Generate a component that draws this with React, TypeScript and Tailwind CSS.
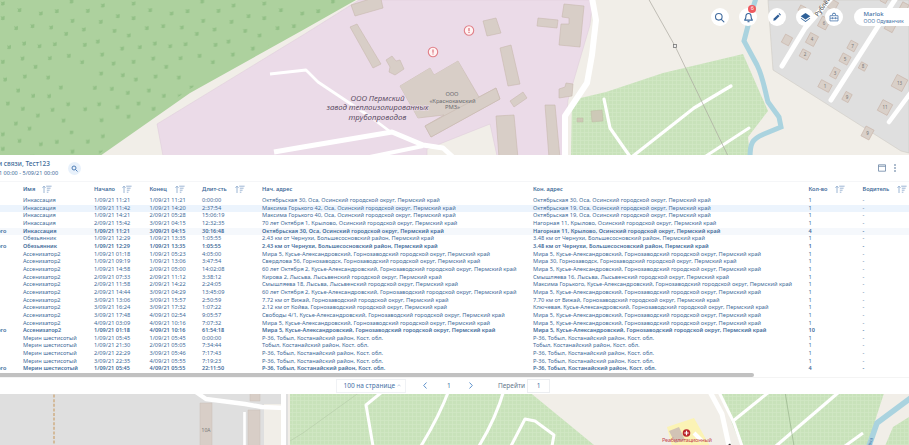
import React from "react";

type Row = {
  name: string;
  start: string;
  end: string;
  dur: string;
  from: string;
  to: string;
  count: string;
  total?: boolean;
};

const OSA = "Оса, Осинский городской округ, Пермский край";
const GORN = "Горнозаводский городской округ, Пермский край";
const KUS = "Кусье-Александровский, " + GORN;
const BOL = "от Чернухи, Большесосновский район, Пермский край";
const LYS = "Лысьва, Лысьвенский городской округ, Пермский край";
const TOB = "Тобыл, Костанайский район, Кост. обл.";
const KRY = "Крылово, Осинский городской округ, Пермский край";

const r = (
  name: string,
  start: string,
  end: string,
  dur: string,
  from: string,
  to: string,
  count = "1",
  total = false
): Row => ({ name, start, end, dur, from, to, count, total });

const rows: Row[] = [
  r("Инкассация", "1/09/21 11:21", "1/09/21 11:21", "0:00:00", "Октябрьская 30, " + OSA, "Октябрьская 30, " + OSA),
  r("Инкассация", "1/09/21 11:42", "1/09/21 14:20", "2:37:54", "Максима Горького 42, " + OSA, "Октябрьская 19, " + OSA),
  r("Инкассация", "1/09/21 14:21", "2/09/21 05:28", "15:06:19", "Максима Горького 40, " + OSA, "Октябрьская 19, " + OSA),
  r("Инкассация", "2/09/21 15:42", "3/09/21 04:15", "12:32:35", "70 лет Октября 1, " + KRY, "Нагорная 11, " + KRY),
  r("Инкассация", "1/09/21 11:21", "3/09/21 04:15", "30:16:48", "Октябрьская 30, " + OSA, "Нагорная 11, " + KRY, "4", true),
  r("Обезьянник", "1/09/21 12:29", "1/09/21 13:35", "1:05:55", "2.43 км " + BOL, "3.48 км " + BOL),
  r("Обезьянник", "1/09/21 12:29", "1/09/21 13:35", "1:05:55", "2.43 км " + BOL, "3.48 км " + BOL, "1", true),
  r("Ассенизатор2", "1/09/21 01:18", "1/09/21 05:23", "4:05:00", "Мира 5, " + KUS, "Мира 5, " + KUS),
  r("Ассенизатор2", "1/09/21 09:19", "1/09/21 13:06", "3:47:54", "Свердлова 56, Горнозаводск, " + GORN, "Мира 30, Горнозаводск, " + GORN),
  r("Ассенизатор2", "1/09/21 14:58", "2/09/21 05:00", "14:02:08", "60 лет Октября 2, " + KUS, "Мира 5, " + KUS),
  r("Ассенизатор2", "2/09/21 07:33", "2/09/21 11:12", "3:38:12", "Кирова 2, " + LYS, "Смышляева 16, " + LYS),
  r("Ассенизатор2", "2/09/21 11:58", "2/09/21 14:22", "2:24:05", "Смышляева 18, " + LYS, "Максима Горького, " + KUS),
  r("Ассенизатор2", "2/09/21 14:44", "3/09/21 04:29", "13:45:09", "60 лет Октября 2, " + KUS, "Мира 5, " + KUS),
  r("Ассенизатор2", "3/09/21 13:06", "3/09/21 15:57", "2:50:59", "7.72 км от Вижай, " + GORN, "7.70 км от Вижай, " + GORN),
  r("Ассенизатор2", "3/09/21 16:24", "3/09/21 17:32", "1:07:22", "2.12 км от Койва, " + GORN, "Ключевая, " + KUS),
  r("Ассенизатор2", "3/09/21 17:48", "4/09/21 02:54", "9:05:57", "Свободы 4/1, " + KUS, "Мира 5, " + KUS),
  r("Ассенизатор2", "4/09/21 03:09", "4/09/21 10:16", "7:07:32", "Мира 5, " + KUS, "Мира 5, " + KUS),
  r("Ассенизатор2", "1/09/21 01:18", "4/09/21 10:16", "61:54:18", "Мира 5, " + KUS, "Мира 5, " + KUS, "10", true),
  r("Мерин шестисотый", "1/09/21 05:45", "1/09/21 05:45", "0:00:00", "Р-36, " + TOB, "Р-36, " + TOB),
  r("Мерин шестисотый", "1/09/21 21:30", "2/09/21 05:05", "7:34:44", TOB, TOB),
  r("Мерин шестисотый", "2/09/21 22:29", "3/09/21 05:46", "7:17:43", "Р-36, " + TOB, "Р-36, " + TOB),
  r("Мерин шестисотый", "3/09/21 22:35", "4/09/21 05:55", "7:19:23", "Р-36, " + TOB, "Р-36, " + TOB),
  r("Мерин шестисотый", "1/09/21 05:45", "4/09/21 05:55", "22:11:50", "Р-36, " + TOB, "Р-36, " + TOB, "4", true),
];

const COLS =
  "grid grid-cols-[23px_71px_55.5px_52.5px_60px_271px_275.5px_54px_46.5px] items-center whitespace-nowrap";

function SortIcon() {
  return (
    <svg className="h-[9px] w-[10px] shrink-0" viewBox="0 0 10 9" fill="none" stroke="#7c9ec5" strokeWidth="0.75">
      <path d="M2 8V1.2M0.5 2.8L2 1.2L3.5 2.8M4.2 1.2H9.6M4.8 3.2H8.6M4.8 5.2H7.6M4.8 7.2H6.4" />
    </svg>
  );
}

function Head({ label, w }: { label: string; w: string }) {
  return (
    <div className="flex items-center">
      <span className={w}>{label}</span>
      <SortIcon />
    </div>
  );
}

const trees = [
  [58, 30], [122, 40], [170, 33], [214, 4], [263, 32], [308, 16], [353, 48], [8, 10], [8, 54], [48, 84], [97, 78],
  [153, 82], [217, 62], [302, 65], [198, 101], [251, 88], [343, 92], [386, 106], [72, 130], [27, 141], [118, 138],
  [164, 132], [254, 134], [293, 124], [366, 145], [67, 175], [149, 174], [206, 167], [8, 185], [106, 200], [246, 186],
  [306, 163], [340, 190], [144, 232], [74, 229], [15, 238], [303, 220], [368, 225], [182, 262], [54, 271], [284, 263],
  [335, 266], [383, 278], [99, 287], [147, 288], [23, 310], [68, 326], [157, 329], [204, 312], [255, 327], [297, 312],
  [352, 321], [113, 346], [385, 349], [190, 361], [304, 360], [47, 370], [88, 385],
];

const houses: [number, number, number, number, number, string][] = [
  [787, 40, 8, 9, 28, ""], [812, 39.5, 9, 11, 28, "4"], [805, 54.5, 9, 8, 28, "2"], [824, 23, 9, 11, 28, "6"],
  [833, 5, 8, 9, 28, ""], [852.5, 46, 8, 9, 28, "7"], [845, 59, 9, 9, 28, "5"], [835, 73, 7, 10, 28, "3"],
  [825, 86, 12, 8, 28, "1"], [863, 66.5, 7, 7, 28, "8"], [847, 97, 7, 9, 28, "9"], [890, 27, 9, 8, 28, ""],
  [899.5, 83, 12, 13, 28, "13"], [885, 107.5, 11, 12, 28, "11"], [867.5, 133, 9, 11, 28, "9"],
  [802, 9, 6, 6, 28, ""], [884, 0, 6, 5, 28, ""], [904, 7, 7, 8, 28, ""],
];

function MapLayer() {
  return (
    <svg className="absolute inset-0 h-[445px] w-[909px]" viewBox="0 0 909 445">
      <defs>
        <pattern id="wood" width="130.7" height="130.7" patternUnits="userSpaceOnUse">
          <g fill="#8bbb80" opacity="0.8">
            {trees.map(([x, y], i) => (
              <path key={i} transform={`translate(${x / 3} ${y / 3})`} d="M-2.2 -2L-0.6 -1.2L2 -2.1L1.9 1.6L0.2 2.2L-1.9 1.8L-1.2 0Z" />
            ))}
          </g>
        </pattern>
        <pattern id="plots" width="4" height="4" patternUnits="userSpaceOnUse">
          <rect width="4" height="4" fill="#c8e2ba" />
          <path d="M0 0.5H4M0.5 0V4" stroke="#d0e7c4" strokeWidth="0.8" />
        </pattern>
      </defs>
      <rect width="909" height="445" fill="#f1eee8" />

      <path d="M0 0H356L303 30L190 93L100 156H0Z" fill="#add19e" />
      <path d="M0 0H352L300 28L188 90L96 156H0Z" fill="url(#wood)" />
      <path d="M359 0H593L590 25L568 100L563 156H497L490 124L427 149V156H163L157 124L303 35Z" fill="#ebdbe8" stroke="#dccbd9" strokeWidth="0.5" />

      <g fill="none" stroke="#fff" strokeLinejoin="round">
        <path d="M270 74L306 70L318 82L348 102L372 118L392 133" strokeWidth="2.8" />
        <path d="M274 152L303 147L392 132L423 145L443 148L454 158" strokeWidth="5" />
        <path d="M365 158L423 146" strokeWidth="4" />
      </g>

      <g fill="#d8cec7" stroke="#c7b9ae" strokeWidth="0.6">
        <path d="M351 5L370 -1H381L383 8L355 16Z" />
        <path d="M350 27L357 24L381 64L373 68Z" />
        <path d="M386 60L392 56L396 61L400 60L404 69L395 75L389 72L390 67Z" />
        <path d="M400 86L430 68L434 75L458 61L479 97L496 88L500 99L431 137L425 126L444 115L418 118Z" />
        <path d="M425 126L496 88L500 99L431 137Z" />
        <path d="M483 21L496 18L501 33L487 36Z" />
        <path d="M538 18L558 20L557 28L537 26Z" />
        <path d="M564 4L584 6L580 47L559 45L561 24H569V18L562 17Z" />
        <path d="M500 48L511 45L520 84L508 86Z" />
        <path d="M510 101L523 92L527 98L514 107Z" />
        <path d="M559 89L565 87L566 83L573 84L572 96L559 98Z" />
        <path d="M496 116L514 115L518 158H499Z" />
        <path d="M545 105H555L560 158H549Z" />
      </g>
      <path d="M400 86L430 68L434 75L458 61L478 98L418 118Z" fill="#d8cec7" />

      <path d="M572 100L606 92L663 73L743 54L768 111L748 137L750 157H571Z" fill="url(#plots)" />
      <g fill="#cdc9b7" stroke="#bcbba2" strokeWidth="0.5">
        <path d="M591 111L602 110L603 121L592 122Z" />
        <path d="M577 118H583V122H577Z" />
      </g>
      <g fill="none" stroke="#fff" strokeLinejoin="round" strokeLinecap="round">
        <path d="M592 -2L596 20L592 55L587 83L565 116V158" strokeWidth="6" />
        <path d="M604 99L610 128L631 158" strokeWidth="3.2" />
        <path d="M633 156L694 108L731 86" strokeWidth="3.2" />
        <path d="M706 156L749 128" strokeWidth="3" />
      </g>
      <path d="M648 -2L675 46L728 156" fill="none" stroke="#aaa79f" strokeWidth="0.7" />
      <rect x="673.5" y="44.5" width="3" height="3" fill="#eee" stroke="#777" strokeWidth="0.8" />
      <path d="M756 -2L750 18L744 41L757 65C763 77 765 91 768 102L779 117L781 127L764 134C752 139 750 143 750 158" fill="none" stroke="#aad3df" strokeWidth="5" />

      <path d="M768 0H909V153L901 151L773 70Z" fill="#dfdfdf" stroke="#cfcbc5" strokeWidth="0.6" />
      {houses.map(([x, y, w, h, a, n], i) => (
        <g key={i} transform={`translate(${x} ${y}) rotate(${a})`}>
          <rect x={-w / 2} y={-h / 2} width={w} height={h} fill="#d9d0c9" stroke="#c8b3a6" strokeWidth="0.6" />
          <text x="0" y="1.6" fontSize="4.5" textAnchor="middle" fill="#777" transform={`rotate(${-a})`} className="font-['Noto_Sans',sans-serif]">{n}</text>
        </g>
      ))}
      <g fill="none" stroke="#fff" strokeLinecap="round" strokeLinejoin="round">
        <path d="M833 -4L805 28L782 66" strokeWidth="5" />
        <path d="M896 -2L831 100" strokeWidth="5" />
        <path d="M912 91L889 122" strokeWidth="4.5" />
      </g>
      <text transform="translate(818 17) rotate(-55)" fontSize="6.5" fill="#444" className="font-['Noto_Sans',sans-serif]">Рублёв</text>

      {[[433, 52], [469, 30.5]].map(([x, y]) => (
        <g key={x}>
          <path d={`M${x - 2} ${y + 4}L${x} ${y + 8}L${x + 2} ${y + 4}Z`} fill="#eed9e2" />
          <circle cx={x} cy={y} r="4.7" fill="#fff3f3" stroke="#e07f88" strokeWidth="1.1" />
          <path d={`M${x} ${y - 2.6}V${y + 0.8}M${x} ${y + 1.6}V${y + 2.6}`} stroke="#d9636f" strokeWidth="1.1" />
        </g>
      ))}

      <g className="font-['Noto_Sans',sans-serif]" textAnchor="middle" fontStyle="italic" fontSize="8" fill="#5e4f66" stroke="#ebdbe8" strokeWidth="1.2" paintOrder="stroke">
        <text x="377.5" y="101.200" textLength="54">ООО Пермский</text>
        <text x="377.5" y="110.400" textLength="102">завод теплоизолированных</text>
        <text x="377.5" y="119.600" textLength="58">трубопроводов</text>
      </g>
      <g className="font-['Noto_Sans',sans-serif]" textAnchor="middle" fontSize="5.8" fill="#6b6b70">
        <text x="452" y="96" textLength="13">ООО</text>
        <text x="452.5" y="102.6" textLength="46">«Краснокамский</text>
        <text x="452.5" y="109" textLength="15">РМЗ»</text>
      </g>

      <path d="M0 390H288V445H0Z" fill="#dfdfdf" />
      <path d="M264 404H281V445H264Z" fill="#f1eee8" />
      <path d="M54 390V445" stroke="#c99c63" strokeWidth="1.1" strokeDasharray="3 1.6" fill="none" />
      <g fill="#d8cec7" stroke="#c9bdb4" strokeWidth="0.5">
        <path d="M200 403H212V446H200Z" />
        <path d="M250 390H260V401H250Z" />
        <path d="M248 410H260V446H248Z" />
      </g>
      <text x="206" y="432" fontSize="5" textAnchor="middle" fill="#777" className="font-['Noto_Sans',sans-serif]">10А</text>
      <path d="M290 390H527L594 445H290Z" fill="url(#plots)" />
      <path d="M360 392L303 433L290 441" stroke="#b7cfaa" strokeWidth="0.7" fill="none" />
      <path d="M719 390H885L875 421L870 446H741Z" fill="url(#plots)" />
      <path d="M909 417L893 427L885 446H909Z" fill="url(#plots)" />
      <g fill="none" stroke="#fff" strokeLinejoin="round">
        <path d="M193 390L206 399L245 404L262 407L285 408" strokeWidth="4.5" />
        <path d="M244.500 412V446" strokeWidth="2.6" />
        <path d="M283.500 390V446" strokeWidth="5" />
        <path d="M382 392L366 405L373 446" strokeWidth="3" />
        <path d="M449 390C442 409 432 428 421 446" strokeWidth="3" />
        <path d="M504 390C498 411 490 428 479 446" strokeWidth="3" />
        <path d="M511 446L525 419L535 421L554 435L552 446" strokeWidth="3" />
        <path d="M709 390L722 414L729 446" strokeWidth="5" />
        <path d="M718 390L734 423L742 446" strokeWidth="3" />
        <path d="M769 392L733 421" strokeWidth="3" />
        <path d="M839 392L776 446" strokeWidth="3.2" />
        <path d="M863 433L845 446" strokeWidth="3" />
      </g>
      <path d="M785 392L794 446" stroke="#8faa83" strokeWidth="0.6" fill="none" />
      <path d="M912 397L877 423L869 446" stroke="#aad3df" strokeWidth="5.500" fill="none" />
      <path d="M667 427L694 418L710 446H672Z" fill="#fbf3b5" />
      <path d="M669 431L679 427L685 440L675 443Z" fill="#d2c3b5" />
      <path d="M694 433L702 441" stroke="#fff" strokeWidth="4" />
      <circle cx="686.500" cy="433" r="3.800" fill="#b9242a" />
      <path d="M684.300 433H688.700M686.500 430.800V435.200" stroke="#fff" strokeWidth="1.200" />
      <text x="687" y="442.300" fontSize="5.600" textAnchor="middle" textLength="50" fill="#c64850" className="font-['Noto_Sans',sans-serif]">Реабилитационный</text>
      <path d="M728 445L730 443.500L731 445Z" fill="#333" />
      <text transform="translate(871 446) rotate(-75)" fontSize="5" fill="#4d80b3" className="font-['Noto_Sans',sans-serif]">вка</text>
    </svg>
  );
}

function RoundButton({ children, badge }: { children: React.ReactNode; badge?: string }) {
  return (
    <button className="relative flex size-[18px] items-center justify-center rounded-full bg-white">
      {children}
      {badge && (
        <span className="absolute -top-[3.500px] left-[9px] flex size-[8px] items-center justify-center rounded-full bg-[#ee5a5f] text-[5.500px] leading-none text-white">
          {badge}
        </span>
      )}
    </button>
  );
}

function Toolbar() {
  return (
    <div className="flex h-[155px] shrink-0 items-start justify-end pt-[8px]">
      <div className="flex gap-[10.600px]">
        <RoundButton>
          <svg className="size-[11px]" viewBox="0 0 11 11" fill="none" stroke="#426c9f" strokeWidth="1.1" strokeLinecap="round">
            <circle cx="4.800" cy="4.800" r="3.300" />
            <path d="M7.300 7.300L9.900 9.900" />
          </svg>
        </RoundButton>
        <RoundButton badge="6">
          <svg className="size-[11px]" viewBox="0 0 11 11" fill="none" stroke="#36659c" strokeWidth="1.1" strokeLinejoin="round">
            <path d="M5.500 1.500C3.700 1.500 2.900 2.900 2.900 4.400C2.900 6.700 2.300 7 1.600 8.100H9.400C8.700 7 8.100 6.700 8.100 4.400C8.100 2.900 7.300 1.500 5.500 1.500Z" />
            <path d="M4.500 9.700H6.500" />
          </svg>
        </RoundButton>
        <RoundButton>
          <svg className="size-[10px]" viewBox="0 0 10 10" fill="#2f5d96">
            <path d="M1.300 8.700L1.800 6.600L6 2.400L7.600 4L3.400 8.200Z" />
            <path d="M6.600 1.800L7.300 1.100L8.900 2.700L8.200 3.400Z" />
          </svg>
        </RoundButton>
        <RoundButton>
          <svg className="size-[11px]" viewBox="0 0 11 11" fill="#2f6199">
            <path d="M5.500 1L10.300 4.300L5.500 7.600L0.700 4.300Z" />
            <path d="M1.200 6L5.500 8.900L9.800 6L10.300 6.500L5.500 10L0.700 6.500Z" />
          </svg>
        </RoundButton>
        <RoundButton>
          <svg className="size-[10px]" viewBox="0 0 10 10" fill="none" stroke="#5e86b5" strokeWidth="0.900">
            <path d="M1 3.700H9V8.900H1ZM3.200 3.700L3.700 1.500H6.300L6.800 3.700M1 6.200H9M3.500 5.200V7.200M6.500 5.200V7.200M5 0.500V1.500" />
          </svg>
        </RoundButton>
      </div>
      <div className="ml-[10.500px] flex h-[18px] w-[55.500px] flex-col justify-center rounded-l-full bg-white pl-[10px] whitespace-nowrap text-[#4672a6]">
        <span className="text-[6px] leading-[7px] font-medium">Marlok</span>
        <span className="text-[5.100px] leading-[6px]">ООО Одуванчик</span>
      </div>
    </div>
  );
}

function ReportPanel() {
  return (
    <section className="flex h-[238.500px] shrink-0 flex-col overflow-hidden bg-white text-[5.660px] text-[#426b99]">
      <header className="flex h-[27px] shrink-0 items-center border-b border-[#f5f6f8]">
        <div className="flex w-[68px] flex-col overflow-hidden whitespace-nowrap">
          <span className="-ml-[2px] text-[6.500px] leading-[10px] font-medium">и связи, Тест123</span>
          <span className="-ml-[1px] text-[5.550px] leading-[9px]">1 00:00 - 5/09/21 00:00</span>
        </div>
        <button className="flex size-[13px] items-center justify-center rounded-full bg-[#e8f1fb]">
          <svg className="size-[7px]" viewBox="0 0 7 7" fill="none" stroke="#3f72af" strokeWidth="0.900">
            <circle cx="3" cy="3" r="2" />
            <path d="M4.500 4.500L6.500 6.500" />
          </svg>
        </button>
        <div className="mr-[13.500px] ml-auto flex items-center gap-[8px]">
          <svg className="h-[8px] w-[8px]" viewBox="0 0 8 8" fill="none" stroke="#6c87a6" strokeWidth="0.800">
            <path d="M0.500 0.800H7.500V7.200H0.500ZM0.500 2.300H7.500" />
          </svg>
          <svg className="h-[8px] w-[2px]" viewBox="0 0 2 8" fill="#44688f">
            <circle cx="1" cy="1" r="0.800" />
            <circle cx="1" cy="4" r="0.800" />
            <circle cx="1" cy="7" r="0.800" />
          </svg>
        </div>
      </header>
      <div className={`${COLS} h-[15px] shrink-0 text-[5.600px] font-semibold`}>
        <span />
        <Head label="Имя" w="w-[18.500px]" />
        <Head label="Начало" w="w-[27.500px]" />
        <Head label="Конец" w="w-[25px]" />
        <Head label="Длит-сть" w="w-[32.500px]" />
        <span>Нач. адрес</span>
        <span>Кон. адрес</span>
        <Head label="Кол-во" w="w-[26.500px]" />
        <Head label="Водитель" w="w-[34.500px]" />
      </div>
      <div className="shrink-0">
        {rows.map((row, i) => (
          <div
            key={i}
            className={`${COLS} h-[7.670px] leading-[7.670px] ${row.total ? "text-[5.550px] font-semibold" : ""} ${
              i === 1 ? "bg-[#ecf4fd]" : i === 4 ? "bg-[#f5f8fc]" : ""
            }`}
          >
            <span className="flex w-[6.500px] justify-end">{row.total ? "ого" : ""}</span>
            <span>{row.name}</span>
            <span>{row.start}</span>
            <span>{row.end}</span>
            <span>{row.dur}</span>
            <span>{row.from}</span>
            <span>{row.to}</span>
            <span>{row.count}</span>
            <span>-</span>
          </div>
        ))}
      </div>
      <div className="h-[4.500px] shrink-0 border-b border-[#f4f4f4]">
        <div className="h-[4px] w-[754px] rounded-r-[2px] bg-[#c1c1c1]" />
      </div>
      <footer className="flex grow items-center pl-[335.500px] text-[6.500px] text-[#4672a6]">
        <div className="flex h-[14px] w-[70.500px] items-center justify-end gap-[2px] border border-[#f0f2f5] pr-[4px]">
          <span>100 на странице</span>
          <svg className="h-[3px] w-[4px]" viewBox="0 0 4 3" fill="none" stroke="#a0b4cc" strokeWidth="0.600">
            <path d="M0.500 2.300L2 0.700L3.500 2.300" />
          </svg>
        </div>
        <svg className="ml-[17px] h-[7px] w-[4px]" viewBox="0 0 4 7" fill="none" stroke="#4d86c6" strokeWidth="0.900">
          <path d="M3.500 0.500L0.700 3.500L3.500 6.500" />
        </svg>
        <span className="ml-[20px] w-[22px]">1</span>
        <svg className="h-[7px] w-[4px]" viewBox="0 0 4 7" fill="none" stroke="#4d86c6" strokeWidth="0.900">
          <path d="M0.500 0.500L3.300 3.500L0.500 6.500" />
        </svg>
        <span className="ml-[25px] w-[29px] text-[#66788c]">Перейти</span>
        <div className="flex h-[14px] w-[23px] items-center justify-center border border-[#eceef1]">1</div>
      </footer>
    </section>
  );
}

export default function App() {
  return (
    <main className="relative h-[445px] w-[909px] overflow-hidden font-['Noto_Sans',sans-serif]">
      <MapLayer />
      <div className="relative flex h-full flex-col">
        <Toolbar />
        <ReportPanel />
      </div>
    </main>
  );
}
